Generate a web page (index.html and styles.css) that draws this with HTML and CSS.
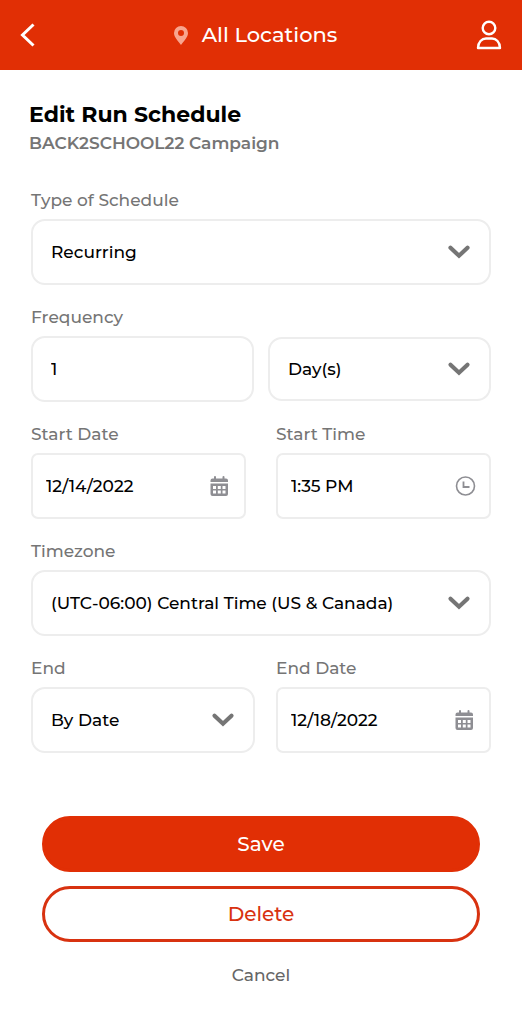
FILE: index.html
```
<!DOCTYPE html>
<html lang="en">
<head>
<meta charset="utf-8">
<meta name="viewport" content="width=device-width, initial-scale=1">
<title>Edit Run Schedule</title>
<link rel="stylesheet" href="styles.css">
</head>
<body>
<svg class="sprite" aria-hidden="true">
  <symbol id="chevron" viewBox="0 0 24 24"><path d="M3.500 7.800L12 15.700L20.500 7.800" fill="none" stroke="currentColor" stroke-width="4.200" stroke-linecap="round"/></symbol>
  <symbol id="calendar" viewBox="0 0 24 24">
    <path fill="currentColor" fill-rule="evenodd" d="M2.500 8V6.500Q2.500 4.500 4.500 4.500H6V3Q6 2 7 2T8 3V4.500H14.500V3Q14.500 2 15.500 2T16.500 3V4.500H18Q20 4.500 20 6.500V8ZM2.500 9.500H20V20Q20 22 18 22H4.500Q2.500 22 2.500 20ZM5 12V15H8V12ZM9.800 12V15H12.800V12ZM14.500 12V15H17.500V12ZM5 16.500V19.500H8V16.500ZM9.800 16.500V19.500H12.800V16.500ZM14.500 16.500V19.500H17.500V16.500Z"/>
  </symbol>
  <symbol id="clock" viewBox="0 0 24 24"><g fill="none" stroke="currentColor"><circle cx="12.500" cy="12" r="9" stroke-width="1.600"/><path d="M10.500 7.500V13H16.500" stroke-width="1.800"/></g></symbol>
</svg>

<header class="topbar">
  <button class="icon-button" type="button" aria-label="Back">
    <svg class="back-icon" viewBox="0 0 15 24"><path d="M13.500 1.500L2.500 12L13.500 22.500" fill="none" stroke="currentColor" stroke-width="3"/></svg>
  </button>
  <button class="location" type="button">
    <svg class="pin-icon" viewBox="0 0 14 19" aria-hidden="true"><path fill="currentColor" fill-rule="evenodd" d="M7 0A7 7 0 0 0 0 7C0 11 3.500 14.500 7 19C10.500 14.500 14 11 14 7A7 7 0 0 0 7 0ZM7 4A3 3 0 1 1 7 10A3 3 0 1 1 7 4Z"/></svg>
    <span>All Locations</span>
  </button>
  <button class="icon-button" type="button" aria-label="Account">
    <svg class="user-icon" viewBox="0 0 26 30"><g fill="none" stroke="currentColor" stroke-width="2.400"><circle cx="13" cy="8" r="6.300"/><path stroke-linejoin="round" d="M2 28C2 22 6 18.500 10 18.500H16C20 18.500 24 22 24 28Z"/></g></svg>
  </button>
</header>

<main class="page">
  <h1 class="title">Edit Run Schedule</h1>
  <p class="subtitle">BACK2SCHOOL22 Campaign</p>

  <form class="form">
    <div class="field">
      <label class="label" for="type">Type of Schedule</label>
      <div class="control">
        <select class="box" id="type"><option>Recurring</option></select>
        <svg class="icon chevron"><use href="#chevron"/></svg>
      </div>
    </div>

    <div class="field">
      <label class="label" for="frequency">Frequency</label>
      <div class="row row-frequency">
        <input class="box" id="frequency" type="text" inputmode="numeric" value="1">
        <div class="control">
          <select class="box box-short" aria-label="Frequency unit"><option>Day(s)</option></select>
          <svg class="icon chevron"><use href="#chevron"/></svg>
        </div>
      </div>
    </div>

    <div class="row row-start">
      <div class="field">
        <label class="label" for="start-date">Start Date</label>
        <div class="control">
          <input class="box box-date" id="start-date" type="text" value="12/14/2022">
          <svg class="icon"><use href="#calendar"/></svg>
        </div>
      </div>
      <div class="field">
        <label class="label" for="start-time">Start Time</label>
        <div class="control">
          <input class="box box-date" id="start-time" type="text" value="1:35 PM">
          <svg class="icon"><use href="#clock"/></svg>
        </div>
      </div>
    </div>

    <div class="field">
      <label class="label" for="timezone">Timezone</label>
      <div class="control">
        <select class="box" id="timezone"><option>(UTC-06:00) Central Time (US &amp; Canada)</option></select>
        <svg class="icon chevron"><use href="#chevron"/></svg>
      </div>
    </div>

    <div class="row row-end">
      <div class="field">
        <label class="label" for="end">End</label>
        <div class="control">
          <select class="box" id="end"><option>By Date</option></select>
          <svg class="icon chevron"><use href="#chevron"/></svg>
        </div>
      </div>
      <div class="field">
        <label class="label" for="end-date">End Date</label>
        <div class="control">
          <input class="box box-date" id="end-date" type="text" value="12/18/2022">
          <svg class="icon"><use href="#calendar"/></svg>
        </div>
      </div>
    </div>

    <div class="actions">
      <button class="button button-primary" type="submit">Save</button>
      <button class="button button-outline" type="button">Delete</button>
      <button class="cancel" type="button">Cancel</button>
    </div>
  </form>
</main>
</body>
</html>
```
FILE: styles.css
```
* {
  box-sizing: border-box;
}

body {
  margin: 0;
  background: #fff;
  color: #000;
  font-family: Montserrat, Inter, "Open Sans", sans-serif;
}

button,
input,
select {
  margin: 0;
  font: inherit;
}

button {
  cursor: pointer;
}

.sprite {
  display: none;
}

.topbar {
  display: flex;
  align-items: center;
  justify-content: space-between;
  height: 70px;
  padding: 0 20px;
  background: #e12f05;
  color: #fff;
}

.icon-button,
.location {
  display: flex;
  align-items: center;
  padding: 0;
  border: 0;
  background: none;
  color: inherit;
}

.location {
  gap: 14px;
  font-size: 21px;
  font-weight: 500;
  line-height: 24px;
}

.back-icon {
  width: 15px;
  height: 24px;
}

.pin-icon {
  width: 14px;
  height: 19px;
  color: #f8a58f;
}

.user-icon {
  width: 26px;
  height: 30px;
}

.page {
  padding: 30px 29px;
}

.title {
  margin: 0;
  font-size: 22px;
  font-weight: 700;
  line-height: 30px;
}

.subtitle {
  margin: 0;
  color: #757575;
  font-size: 17px;
  font-weight: 600;
  line-height: 26px;
}

.form {
  display: flex;
  flex-direction: column;
  gap: 22px;
  margin-top: 34px;
  padding: 0 2px;
}

.field {
  min-width: 0;
}

.label {
  display: block;
  margin-bottom: 9px;
  color: #757575;
  font-size: 17px;
  font-weight: 500;
  line-height: 20px;
}

.row {
  display: grid;
  align-items: center;
}

.row-frequency {
  grid-template-columns: 1fr 1fr;
  gap: 14px;
}

.row-start {
  grid-template-columns: 1fr 1fr;
  gap: 30px;
}

.row-end {
  grid-template-columns: 224fr 215fr;
  gap: 21px;
}

.control {
  position: relative;
  min-width: 0;
}

.box {
  display: block;
  width: 100%;
  min-width: 0;
  height: 66px;
  padding: 0 18px;
  border: 2px solid #ededed;
  border-radius: 14px;
  appearance: none;
  background: #fff;
  color: #000;
  font-size: 17px;
  font-weight: 500;
}

.box-short {
  height: 64px;
}

.box-date {
  padding: 0 13px;
  border-radius: 7px;
}

.icon {
  position: absolute;
  top: 50%;
  right: 14px;
  width: 24px;
  height: 24px;
  margin-top: -12px;
  color: #8e8e93;
  pointer-events: none;
}

.chevron {
  right: 20px;
  color: #757575;
}

.actions {
  display: flex;
  flex-direction: column;
  gap: 14px;
  margin-top: 41px;
  padding: 0 11px;
}

.button {
  height: 56px;
  border: 3px solid #e12f05;
  border-radius: 28px;
  font-size: 20px;
  font-weight: 500;
}

.button-primary {
  background: #e12f05;
  color: #fff;
}

.button-outline {
  border-color: #d83210;
  background: #fff;
  color: #d83210;
}

.cancel {
  align-self: center;
  padding: 8px;
  border: 0;
  background: none;
  color: #666;
  font-size: 17px;
  font-weight: 500;
  line-height: 22px;
}
```
